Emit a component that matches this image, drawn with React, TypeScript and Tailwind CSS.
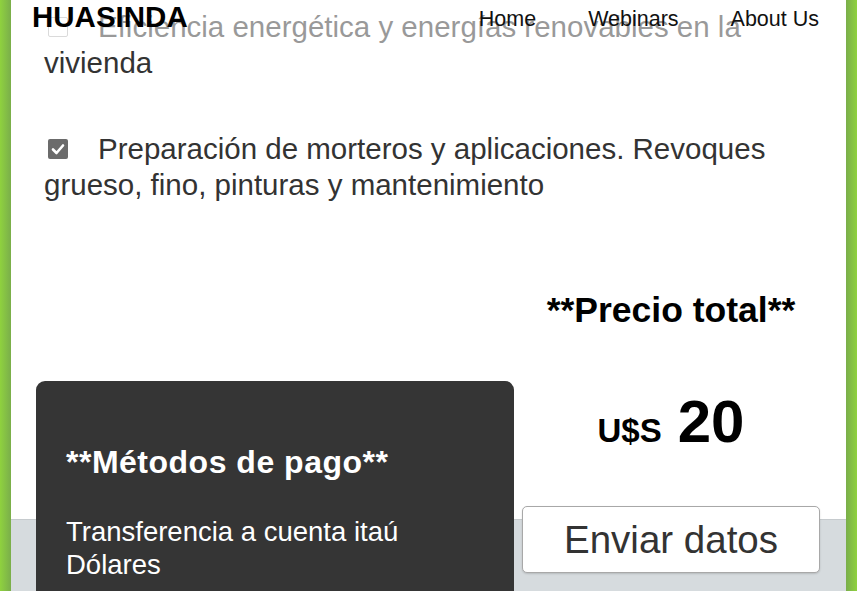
const font = { fontFamily: '"Liberation Sans", Arial, sans-serif' };

function CheckIcon() {
  return (
    <svg viewBox="0 0 20 20" className="w-5 h-5">
      <path d="M5 10.5 L8.5 14 L15 6.5" fill="none" stroke="#fff" strokeWidth="2.6" strokeLinecap="round" strokeLinejoin="round" />
    </svg>
  );
}

function Item({ checked, children }: { checked?: boolean; children: React.ReactNode }) {
  return (
    <p className="text-[29.5px] leading-[36px] text-[#333]">
      {checked ? (
        <span className="inline-block w-5 h-5 ml-[4px] mr-[30px] rounded-[2px] bg-[#6b6b6b]">
          <CheckIcon />
        </span>
      ) : (
        <span className="inline-block w-5 h-5 ml-[4px] mr-[30px] rounded-[2px] border border-[#b5b5b5] bg-white" />
      )}
      {children}
    </p>
  );
}

export default function App() {
  return (
    <div className="flex h-[591px] w-[857px] overflow-hidden" style={font}>
      <div className="w-[11px] shrink-0 bg-gradient-to-r from-[#8fd23e] to-[#7aae4a]" />

      <main className="relative flex-1 flex flex-col bg-[linear-gradient(to_bottom,#fff_519px,#c6cbce_519px,#c6cbce_520px,#d6dbde_520px)]">
        {/* items list */}
        <div className="pl-[33px] pr-[33px] pt-[9px] flex flex-col gap-[50px]">
          <Item>Eficiencia energética y energías renovables en la vivienda</Item>
          <Item checked>Preparación de morteros y aplicaciones. Revoques grueso, fino, pinturas y mantenimiento</Item>
        </div>

        {/* totals + payment */}
        <div className="flex mt-[87px]">
          <div className="ml-[25px] w-[478px] shrink-0 mt-[91px]">
            <div className="h-[260px] rounded-t-[9px] bg-[#353535] pl-[30px] pt-[62px] text-white">
              <h2 className="text-[32px] leading-[38px] font-bold tracking-[0.5px]">**Métodos de pago**</h2>
              <p className="mt-[34px] text-[27.5px] leading-[33px]">
                Transferencia a cuenta itaú
                <br />
                Dólares
              </p>
            </div>
          </div>

          <div className="flex-1 pr-[18px] flex flex-col items-center">
            <h2 className="text-[35.5px] leading-[41px] font-bold text-black">**Precio total**</h2>
            <div className="mt-[59px] leading-[64px] font-bold text-black">
              <span className="text-[33px]">U$S</span>
              <span className="ml-[16px] text-[60px]">20</span>
            </div>
            <button className="mt-[37px] w-[298px] h-[67px] rounded-[5px] border border-[#a8a8a8] bg-white text-[38.5px] text-[#333] shadow-[0_1px_2px_rgba(0,0,0,0.15)]">
              Enviar datos
            </button>
          </div>
        </div>

        {/* navbar overlay */}
        <header className="absolute inset-x-0 top-0 h-[46px] bg-white/50 flex items-start justify-between pl-[21px] pr-[27px]">
          <span className="text-[29.5px] leading-[34px] font-bold text-black">HUASINDA</span>
          <nav className="flex gap-[52px] pt-[2px] text-[21.5px] leading-[34px] text-[#111]">
            <a>Home</a>
            <a>Webinars</a>
            <a>About Us</a>
          </nav>
        </header>
      </main>

      <div className="w-[11px] shrink-0 bg-gradient-to-r from-[#7aae4a] to-[#8fd23e]" />
    </div>
  );
}
